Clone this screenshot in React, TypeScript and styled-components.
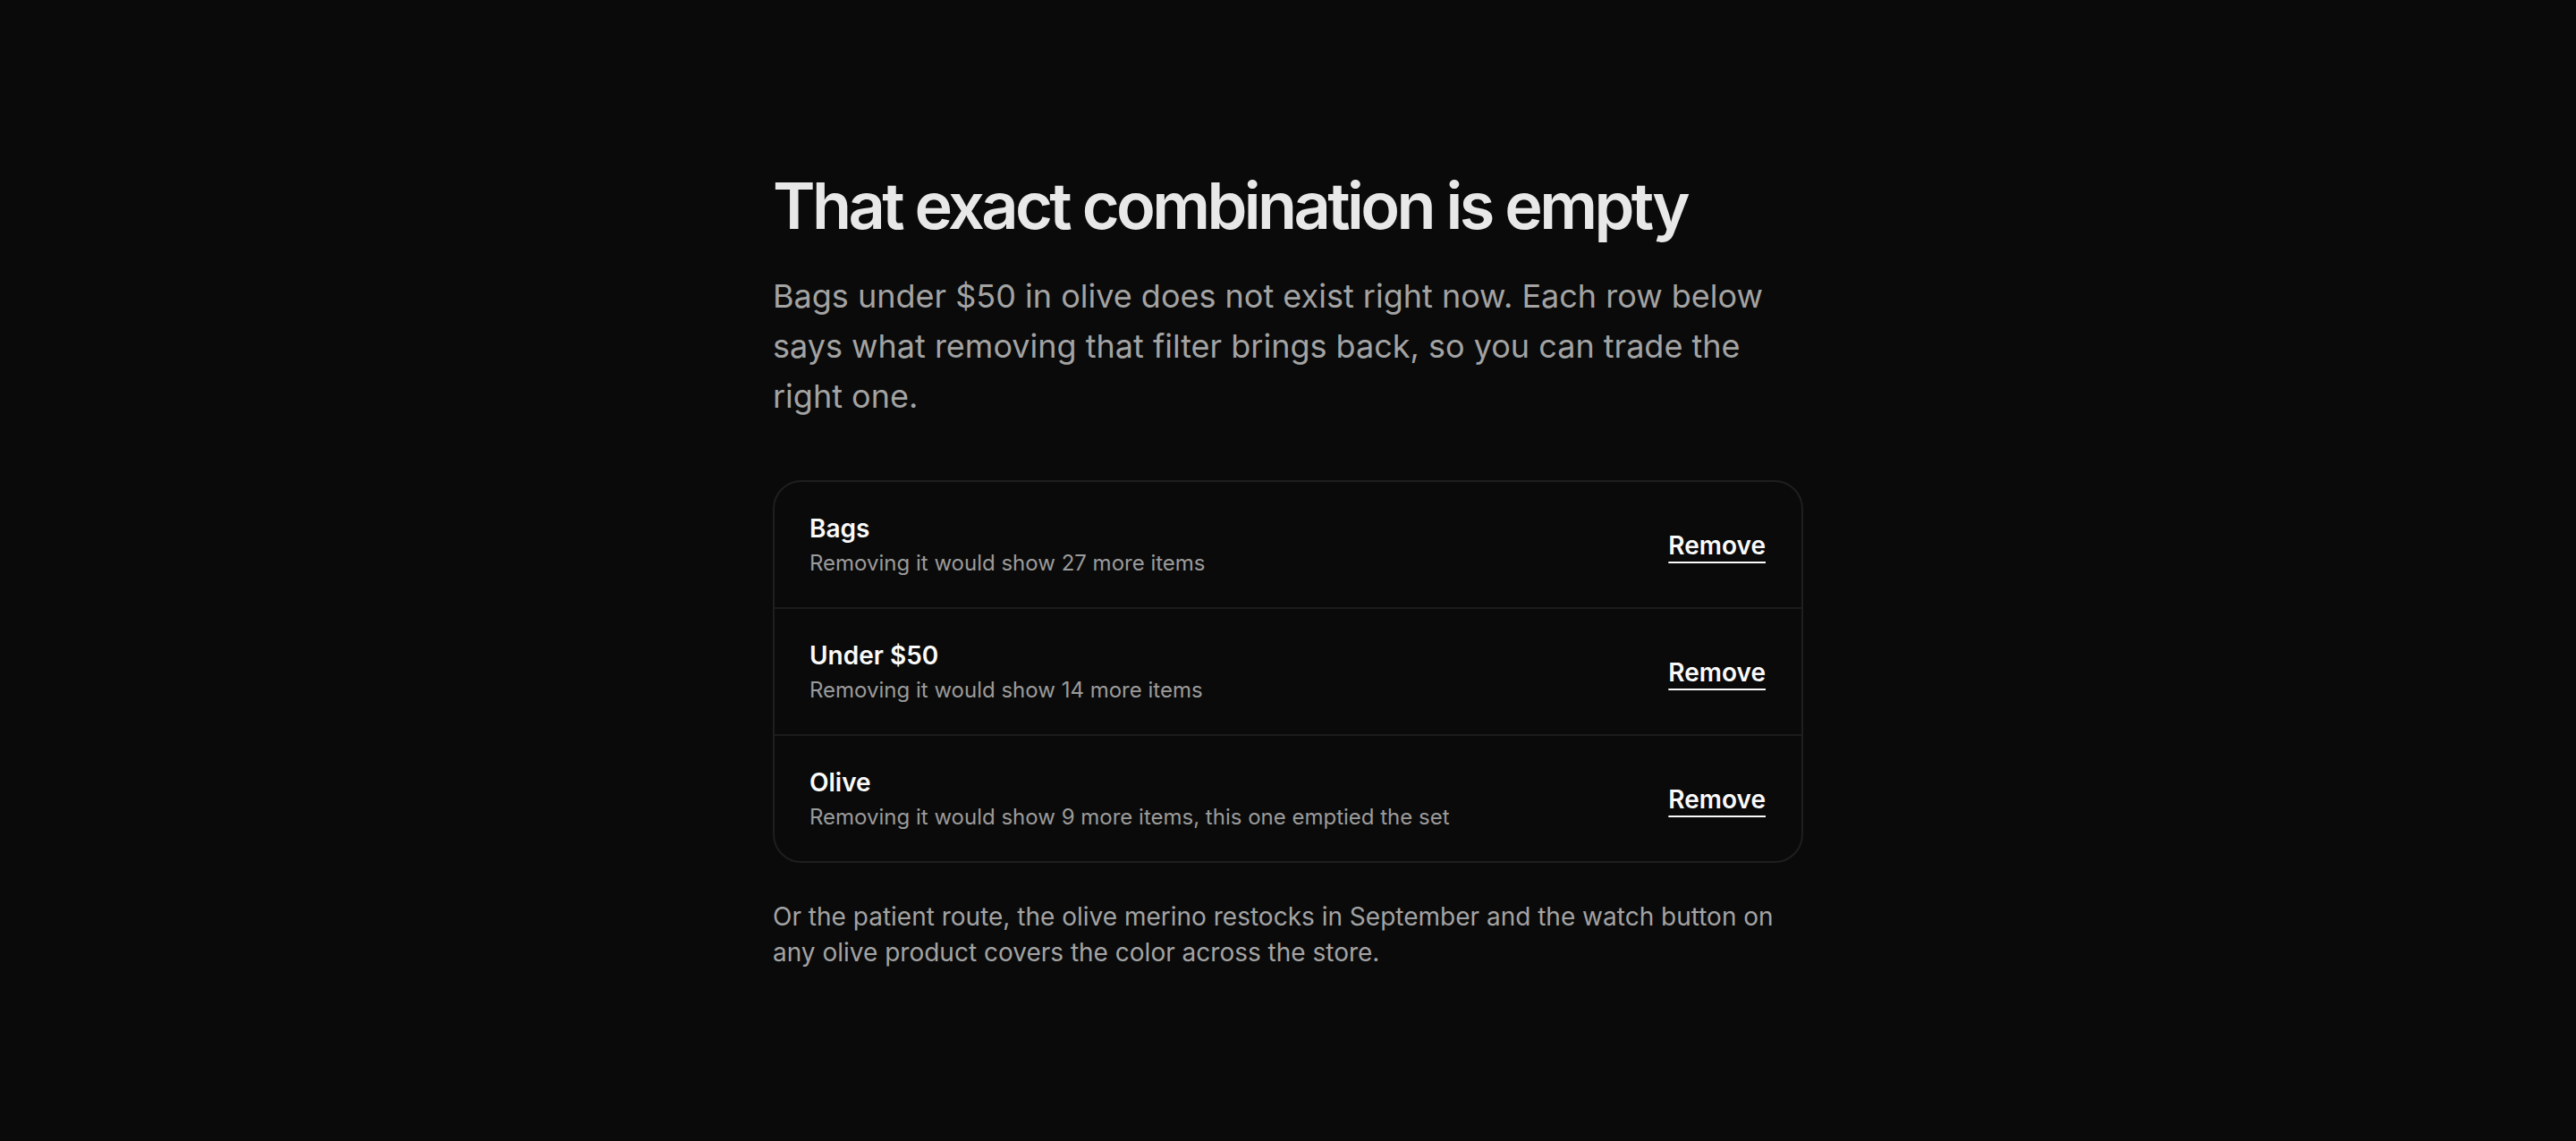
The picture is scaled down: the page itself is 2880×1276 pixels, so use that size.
import styled, { createGlobalStyle } from 'styled-components'

const GlobalStyle = createGlobalStyle`
  html, body {
    margin: 0;
    padding: 0;
    background-color: #0a0a0a;
  }

  body {
    font-family: Inter, 'Noto Sans', 'Liberation Sans', sans-serif;
    -webkit-font-smoothing: antialiased;
  }
`

const Page = styled.main`
  min-height: 1276px;
  padding: 190px 0 120px;
  box-sizing: border-box;
  background-color: #0a0a0a;
`

const Column = styled.section`
  width: 1152px;
  margin: 0 auto;
`

const Title = styled.h1`
  margin: 0 0 34px;
  font-size: 72px;
  line-height: 1.1;
  font-weight: 600;
  letter-spacing: -0.05em;
  color: #e8e8e8;
`

const Lead = styled.p`
  margin: 0 0 66px;
  font-size: 36px;
  line-height: 56px;
  font-weight: 400;
  color: #a3a3a3;
`

const FilterList = styled.ul`
  list-style: none;
  margin: 0;
  padding: 0;
  border: 2px solid #1f1f1f;
  border-radius: 32px;
  overflow: hidden;
`

const FilterRow = styled.li`
  display: flex;
  align-items: center;
  justify-content: space-between;
  gap: 32px;
  padding: 32px 40px 30px 39px;

  & + & {
    border-top: 2px solid #1c1c1c;
  }
`

const FilterText = styled.div`
  display: flex;
  flex-direction: column;
`

const FilterName = styled.span`
  font-size: 28px;
  line-height: 40px;
  font-weight: 600;
  color: #fafafa;
`

const FilterHint = styled.span`
  font-size: 24px;
  line-height: 38px;
  font-weight: 400;
  color: #9b9b9b;
`

const RemoveButton = styled.button`
  padding: 0;
  border: none;
  background: transparent;
  cursor: pointer;
  font-family: inherit;
  font-size: 28px;
  line-height: 40px;
  font-weight: 600;
  color: #fafafa;
  text-decoration: underline;
  text-decoration-thickness: 2px;
  text-underline-offset: 8px;
`

const Footnote = styled.p`
  margin: 40px 0 0;
  font-size: 28px;
  line-height: 40px;
  font-weight: 400;
  color: #a3a3a3;
`

const filters = [
  { name: 'Bags', hint: 'Removing it would show 27 more items' },
  { name: 'Under $50', hint: 'Removing it would show 14 more items' },
  {
    name: 'Olive',
    hint: 'Removing it would show 9 more items, this one emptied the set',
  },
]

export default function App() {
  return (
    <>
      <GlobalStyle />
      <Page>
        <Column>
          <Title>That exact combination is empty</Title>
          <Lead>
            Bags under $50 in olive does not exist right now. Each row below
            says what removing that filter brings back, so you can trade the
            right one.
          </Lead>
          <FilterList>
            {filters.map((filter) => (
              <FilterRow key={filter.name}>
                <FilterText>
                  <FilterName>{filter.name}</FilterName>
                  <FilterHint>{filter.hint}</FilterHint>
                </FilterText>
                <RemoveButton type="button">Remove</RemoveButton>
              </FilterRow>
            ))}
          </FilterList>
          <Footnote>
            Or the patient route, the olive merino restocks in September and
            the watch button on any olive product covers the color across the
            store.
          </Footnote>
        </Column>
      </Page>
    </>
  )
}
